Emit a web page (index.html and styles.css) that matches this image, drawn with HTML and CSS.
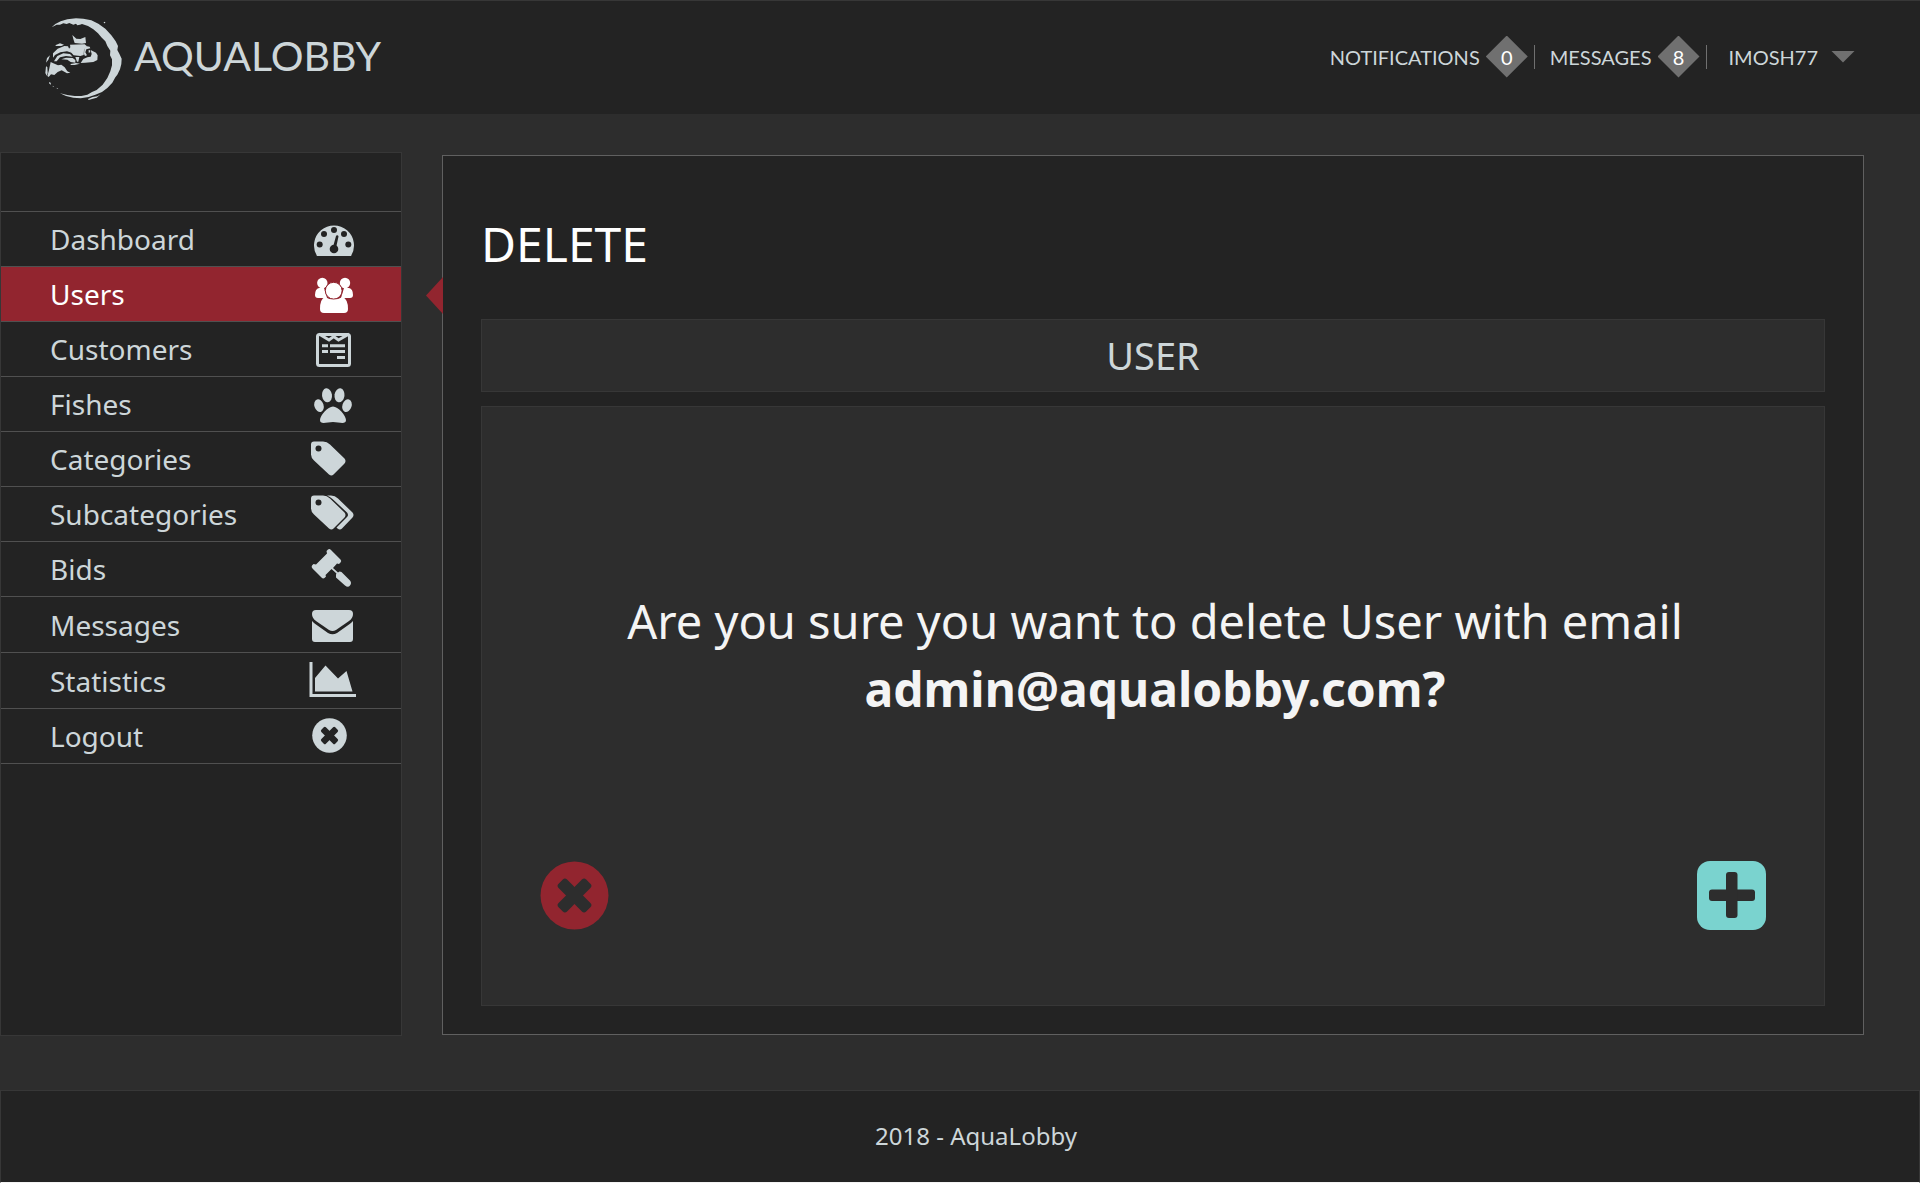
FILE: index.html
```html
<!DOCTYPE html>
<html lang="en">
<head>
<meta charset="utf-8">
<meta name="viewport" content="width=device-width, initial-scale=1">
<title>AquaLobby - Delete user</title>
<link rel="stylesheet" href="styles.css">
</head>
<body>
<header class="topbar">
  <a class="brand" href="#">
    <svg class="brand-mark" viewBox="0 0 300 300" aria-hidden="true">
      <path d="M65 64 L76 54 92 46 112 40 138 37 160 38 184 43 205 53 226 68 244 88 257 106 264 120 262 132 268 143 275 158 274 174 270 190 262 206 256 214 247 230 232 246 216 258 196 266 176 273 152 277 130 275 108 270 90 262 112 267 134 270 154 270 172 266 186 258 200 252 218 236 232 216 241 196 246 178 246 160 240 148 241 134 232 120 226 106 214 94 204 82 190 70 174 60 156 54 150 56 142 58 138 53 130 56 118 51 110 54 100 52 90 56 80 56Z"/>
      <path d="M174 279l14-6 14-2 10-6-12 10-14 4-10 3zM221 49l4-2 1 4-4 1zM57 228l5 2 1 6-5-3zM68 239l4 3-3 1zM79 245l6 3-3 1zM60 148l-9 8-3 14 7-9zM48 181l-2 20 4 8 3-8-1-18z"/>
      <path d="M127 87l12 11 12 1 15-6 2 18-12 2-22-2-4-12z"/>
      <path d="M76 118l14-6 12 4-8 4-16 0z"/>
      <path d="M120 116l44-1 6 5-8 12-1 15-10 3-20-2-9-10-6-8 5-6z"/>
      <path d="M167 120l12 2 2 5-12 3-3 9 5 9-6 2-3-6 1-14zM176 132l4 1 1 6-5 1zM182 132l16 8 5 8-1 14-12 6-24 2-14 1 8-12 12-5 10-2 3-8z"/>
      <path d="M69 142l14-14 20-8 11 1 4 9 7 10-14-4-20 3-16 8-6 8z"/>
      <path d="M72 166l10-16 18-8 20 2 8 8-20-2-18 4-10 12z"/>
      <path d="M94 160l14-5 20 1 8 6 0 8-14-2-10-7zM136 153l12 0-3 14-4 0zM122 174l16-3 12 2-16 4-12 0z"/>
      <path d="M62 168l8 4 14 6 10-2 10 8 8 12 9 4-10 2-16-9-12 5-10 9-10-2-7 8-4-3 5-18z"/>
    </svg>
    <span>AQUALOBBY</span>
  </a>
  <nav class="account" aria-label="Account">
    <a class="account-link" href="#">NOTIFICATIONS <span class="badge">0</span></a>
    <a class="account-link" href="#">MESSAGES <span class="badge">8</span></a>
    <button class="account-user" type="button">IMOSH77 <span class="caret"></span></button>
  </nav>
</header>

<div class="layout">
  <nav class="sidebar" aria-label="Main">
    <ul class="menu">
      <li class="menu-item"><a href="#">Dashboard
        <svg class="icon" viewBox="0 0 52 44"><path d="M11 39a20 20 0 1 1 34 0z"/><g class="hole"><circle cx="28" cy="13" r="3"/><circle cx="18" cy="17" r="3"/><circle cx="38" cy="17" r="3"/><circle cx="13.700" cy="27.500" r="3"/><circle cx="42.300" cy="27.500" r="3"/><circle cx="28" cy="32" r="4.300"/><path d="M27 30l3-11a1.300 1.300 0 0 1 2.500.5L30 31z"/></g></svg></a></li>
      <li class="menu-item menu-item-active"><a href="#" aria-current="page">Users
        <svg class="icon" viewBox="0 0 52 44"><circle cx="16.300" cy="11" r="5.200"/><circle cx="39" cy="11" r="5.200"/><path d="M13 16h5l3 10h-9q-3 0-3-3 0-6 4-7zM43 16h-5l-3 10h9q3 0 3-3 0-6-4-7z"/><circle class="ring" cx="27.700" cy="18.700" r="8.400"/><path d="M19 25q8.500 5 17.500 0 5.500 2 5.500 12 0 4-4 4H18q-4 0-4-4 0-10 5-12z"/></svg></a></li>
      <li class="menu-item"><a href="#">Customers
        <svg class="icon" viewBox="0 0 52 44"><g class="line"><rect x="11.500" y="7.500" width="32" height="31" rx="2"/><path d="M13 7l10 6 4.700-3.500L32.500 13 43 7M16 18.700h6M24 18.700h15M16 24.500h6M24 24.500h15M31 30.500h8"/></g></svg></a></li>
      <li class="menu-item"><a href="#">Fishes
        <svg class="icon" viewBox="0 0 52 44"><ellipse cx="21" cy="13.300" rx="5" ry="7" transform="rotate(-8 21 13.300)"/><ellipse cx="33.500" cy="13.300" rx="5" ry="7" transform="rotate(8 33.500 13.300)"/><ellipse cx="13" cy="23.700" rx="4.600" ry="6.500" transform="rotate(-18 13 23.700)"/><ellipse cx="41" cy="23.700" rx="4.600" ry="6.500" transform="rotate(18 41 23.700)"/><path d="M27 24.500c5 0 13 9 13 13.500 0 5-7 2-13 2s-13 3-13-2c0-4.500 8-13.500 13-13.500z"/></svg></a></li>
      <li class="menu-item"><a href="#">Categories
        <svg class="icon" viewBox="0 0 52 44"><path d="M8 4.500h9q4 0 7 3l14.500 14q2 2.500 0 5L27.500 37.500q-2 2-4.500 0L8 23.500q-3-3-3-6v-10q0-3 3-3z"/><circle class="hole" cx="12.500" cy="11.500" r="3"/></svg></a></li>
      <li class="menu-item"><a href="#">Subcategories
        <svg class="icon" viewBox="0 0 52 44"><path d="M8 3.500h9q4 0 7 3l14.500 14q2 2.500 0 5L27.500 36.500q-2 2-4.500 0L8 22.500q-3-3-3-6v-10q0-3 3-3z"/><path d="M21 3.500h4q4 0 7 3l14.500 14q2 2.500 0 5L36 36.500q-2 2-4.500 0l-1-1L41 25q2-2 0-4.500L26.500 7q-2.500-2.500-5.500-3.500z"/><circle class="hole" cx="12.500" cy="10.500" r="3"/></svg></a></li>
      <li class="menu-item"><a href="#">Bids
        <svg class="icon" viewBox="0 0 52 44"><path d="M20.500 4l1.500-1.500q1.500-1 3 .5L34.500 12.500q1.500 1.500 0 3L33 17l-2-.5-4 4.500 5 4.500 1.500-1 2 .5 8.500 8.500q2 2.500 0 5t-5 0L30 30.500v-3l.5-1-5-4.500-6 6 .5 1.500-1.500 1.500q-1.500 1-3-.5L6.500 21.500q-1.500-1.500-.500-3L7.500 17l2.500.5L21 6.500z"/></svg></a></li>
      <li class="menu-item menu-item-tall"><a href="#">Messages
        <svg class="icon" viewBox="0 0 52 44"><path d="M10 7h33q4 0 4 4 0 4-4 7L30 27q-3.500 2-7 0L10 18q-4-3-4-7 0-4 4-4z"/><path d="M6 18q2 2 4 3.500L22 30q4.500 2.500 9 0l12-8.500q2-1.500 4-3.500v18q0 3-3 3H9q-3 0-3-3z"/></svg></a></li>
      <li class="menu-item menu-item-tall"><a href="#">Statistics
        <svg class="icon" viewBox="0 0 52 44"><path d="M3.500 3h3v32H50v3H3.500zM9 32.500V19L19.500 6.500l12.500 13 8.500-7.500 6 20.500z"/></svg></a></li>
      <li class="menu-item"><a href="#">Logout
        <svg class="icon" viewBox="0 0 52 44"><circle cx="23.500" cy="21.500" r="17.300"/><g class="hole" transform="rotate(45 23.500 21.500)"><rect x="13.700" y="18.300" width="19.600" height="6.400" rx="1.500"/><rect x="20.300" y="11.700" width="6.400" height="19.600" rx="1.500"/></g></svg></a></li>
    </ul>
  </nav>

  <main class="panel">
    <h1 class="panel-title">DELETE</h1>
    <h2 class="panel-subject">USER</h2>
    <form class="confirm">
      <p class="confirm-text">Are you sure you want to delete User with email <strong>admin@aqualobby.com?</strong></p>
      <div class="confirm-actions">
        <button class="action action-cancel" type="button" aria-label="Cancel">
          <svg viewBox="0 0 69 69"><circle cx="34.500" cy="34.500" r="34"/><g class="cut" transform="rotate(45 34.500 34.500)"><rect x="15" y="28.500" width="39" height="12" rx="3"/><rect x="28.500" y="15" width="12" height="39" rx="3"/></g></svg>
        </button>
        <button class="action action-accept" type="submit" aria-label="Confirm">
          <svg viewBox="0 0 69 69"><rect width="69" height="69" rx="13"/><g class="cut"><rect x="12" y="28.500" width="46" height="11.500" rx="3"/><rect x="29" y="11" width="11.500" height="46" rx="3"/></g></svg>
        </button>
      </div>
    </form>
  </main>
</div>

<footer class="footer">2018 - AquaLobby</footer>
</body>
</html>
```
FILE: styles.css
```css
:root {
  --page: #2d2d2d;
  --surface: #232323;
  --edge: #373737;
  --rule: #505050;
  --text: #cdd6d9;
  --red: #92252f;
  --teal: #7ad3cf;
}

* {
  box-sizing: border-box;
}

body {
  margin: 0;
  min-height: 100vh;
  display: flex;
  flex-direction: column;
  background: var(--page);
  color: var(--text);
  font-family: "Noto Sans", "Open Sans", sans-serif;
}

a {
  color: inherit;
  text-decoration: none;
}

button {
  padding: 0;
  border: 0;
  background: none;
  color: inherit;
  font: inherit;
  cursor: pointer;
}

/* Top bar */
.topbar {
  display: flex;
  align-items: center;
  justify-content: space-between;
  height: 114px;
  padding: 0 65px 2px 30px;
  border-top: 1px solid var(--edge);
  background: var(--surface);
  font-family: Lato, sans-serif;
}

.brand {
  display: flex;
  align-items: center;
  gap: 4px;
  padding-bottom: 2px;
  font-size: 41px;
}

.brand-mark {
  width: 100px;
  height: 100px;
  fill: currentColor;
}

.account {
  display: flex;
  align-items: center;
  font-size: 20px;
}

.account-link {
  display: flex;
  align-items: center;
  gap: 6px;
}

.account-link::after {
  content: "";
  width: 1px;
  height: 24px;
  margin-right: 15px;
  background: #707070;
}

.badge {
  display: grid;
  place-items: center;
  width: 42px;
  height: 42px;
  background: #707070;
  clip-path: polygon(50% 0, 100% 50%, 50% 100%, 0 50%);
  color: #fff;
}

.account-user {
  display: flex;
  align-items: center;
  gap: 13px;
  padding-left: 7px;
}

.caret {
  width: 24px;
  height: 12px;
  background: #707070;
  clip-path: polygon(0 0, 100% 0, 50% 100%);
}

/* Page body */
.layout {
  flex: 1;
  display: flex;
  align-items: stretch;
  gap: 40px;
  padding: 38px 56px 54px 0;
}

.sidebar {
  flex: 0 0 402px;
  padding-top: 58px;
  border: 1px solid var(--edge);
  background: var(--surface);
}

.menu {
  margin: 0;
  padding: 0;
  list-style: none;
  border-bottom: 1px solid var(--rule);
}

.menu-item {
  height: 55px;
  border-top: 1px solid var(--rule);
  font-size: 28px;
}

.menu-item-tall {
  height: 56px;
}

.menu-item a {
  display: flex;
  align-items: center;
  justify-content: space-between;
  height: 100%;
  padding: 0 43px 0 49px;
}

.menu-item-active {
  background: var(--red);
  color: #fff;
}

.icon {
  width: 52px;
  height: 44px;
  fill: currentColor;
}

.icon .hole {
  fill: var(--surface);
}

.icon .line {
  fill: none;
  stroke: currentColor;
  stroke-width: 3;
}

.icon .ring {
  stroke: var(--red);
  stroke-width: 1;
}

/* Content panel */
.panel {
  position: relative;
  flex: 1;
  display: flex;
  flex-direction: column;
  margin: 3px 0 1px;
  padding: 54px 38px 28px;
  border: 1px solid #606060;
  background: var(--surface);
}

.panel::before {
  content: "";
  position: absolute;
  top: 121px;
  right: 100%;
  width: 17px;
  height: 37px;
  background: var(--red);
  clip-path: polygon(100% 0, 100% 100%, 0 50%);
}

.panel-title {
  margin: 0 0 41px;
  color: #fff;
  font-size: 48px;
  font-weight: 400;
  line-height: 68px;
}

.panel-subject {
  margin: 0 0 14px;
  border: 1px solid var(--edge);
  background: var(--page);
  font-size: 38px;
  font-weight: 400;
  line-height: 71px;
  text-align: center;
}

.confirm {
  flex: 1;
  display: flex;
  flex-direction: column;
  justify-content: space-between;
  padding: 181px 58px 75px;
  border: 1px solid var(--edge);
  background: var(--page);
}

.confirm-text {
  margin: 0;
  padding-left: 4px;
  color: #f4f4f4;
  font-size: 47px;
  line-height: 67px;
  text-align: center;
}

.confirm-text strong {
  display: block;
  font-size: 48px;
}

.confirm-actions {
  display: flex;
  justify-content: space-between;
}

.action svg {
  display: block;
  width: 69px;
  height: 69px;
  fill: currentColor;
}

.action .cut {
  fill: var(--page);
}

.action-cancel {
  color: var(--red);
}

.action-accept {
  color: var(--teal);
}

/* Footer */
.footer {
  height: 93px;
  padding-left: 32px;
  border: 1px solid var(--edge);
  border-bottom-color: #f4f4f4;
  background: var(--surface);
  font-size: 24px;
  line-height: 90px;
  text-align: center;
}
```
